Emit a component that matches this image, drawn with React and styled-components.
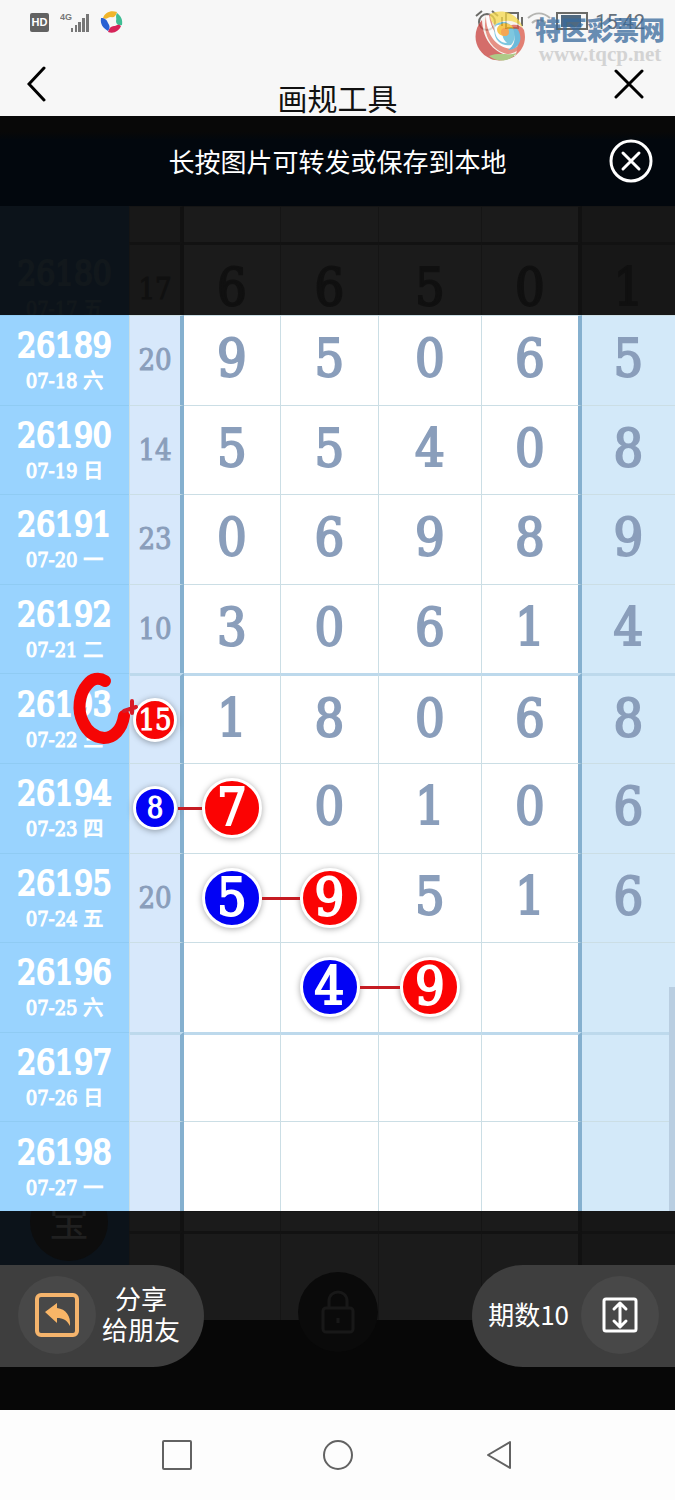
import React from 'react';
import styled, { createGlobalStyle, css } from 'styled-components';

const GlobalStyle = createGlobalStyle`
  * {
    box-sizing: border-box;
  }

  body {
    margin: 0;
    background: #fff;
    font-family: 'Noto Sans CJK SC', sans-serif;
  }

  button {
    border: 0;
    padding: 0;
    background: none;
    color: inherit;
    font: inherit;
    cursor: pointer;
  }

  svg {
    display: block;
  }
`;

const serif = css`
  font-family: 'DejaVu Serif Condensed', 'DejaVu Serif', 'Noto Sans CJK SC', serif;
`;

// phone status bar and title bar
const TopArea = styled.header`
  background: #f7f7f7;
`;

const StatusBar = styled.div`
  position: relative;
  display: flex;
  align-items: center;
  justify-content: space-between;
  height: 44px;
  padding: 0 30px;
  color: #5c5c5c;
`;

const StatusGroup = styled.div`
  display: flex;
  align-items: center;
  gap: ${(props) => props.$gap}px;
`;

const HdBadge = styled.span`
  width: 19px;
  border-radius: 2px;
  background: #626262;
  color: #fff;
  font: bold 11px/19px 'Liberation Sans', sans-serif;
  text-align: center;
`;

const Clock = styled.span`
  font: 20px/24px Roboto, sans-serif;
  color: #66717c;
`;

const Watermark = styled.div`
  position: absolute;
  top: 8px;
  right: 10px;
  display: flex;
  gap: 9px;
  opacity: 0.75;
`;

const WatermarkText = styled.div`
  display: flex;
  flex-direction: column;
  align-items: center;
`;

const WatermarkName = styled.span`
  color: #38699c;
  font-weight: 900;
  font-size: 26px;
  line-height: 42px;
  height: 36px;
`;

const WatermarkUrl = styled.span`
  color: #c8c8c8;
  font: bold 21px/20px 'Liberation Serif', serif;
`;

const TitleBar = styled.div`
  display: grid;
  grid-template-columns: 53px 1fr 44px;
  align-items: center;
  height: 72px;
  padding: 8px 24px 0 15px;
`;

const IconButton = styled.button`
  display: flex;
  align-items: center;
  justify-content: center;
  width: 44px;
  height: 44px;
`;

const Title = styled.h1`
  align-self: end;
  margin: 0;
  color: #111;
  font-weight: 400;
  font-size: 30px;
  line-height: 38px;
  text-align: center;
`;

// dark viewer around the chart
const Viewer = styled.main`
  background: #070707;
`;

const HintBar = styled.div`
  display: grid;
  grid-template-columns: 44px 1fr 44px;
  align-items: center;
  height: 90px;
  padding: 0 22px;
  background: linear-gradient(#080808 16px, #02070d 24px);
  color: #fff;
`;

const Hint = styled.p`
  grid-column: 2;
  margin: 0;
  font-size: 26px;
  line-height: 36px;
  text-align: center;
`;

const DimArea = styled.div`
  height: 109px;
  overflow: hidden;
`;

const Chart = styled.div`
  position: relative;
`;

const ScrollThumb = styled.div`
  position: absolute;
  right: 0;
  bottom: 0;
  width: 6px;
  height: 25%;
  background: #b9cee1;
`;

const lightColors = {
  label: '#99d3fe',
  labelLine: '#8fcbf3',
  sum: '#d7e8fb',
  cell: '#ffffff',
  tail: '#d3e9f9',
  line: '#cbdee5',
  thick: '#bdd9ec',
  side: '#85b0cf',
  labelText: '#ffffff',
  text: '#8a9ebb',
};

const dimColors = {
  label: '#0c131a',
  labelLine: '#0c131a',
  sum: '#181818',
  cell: '#1b1b1b',
  tail: '#171717',
  line: '#151515',
  thick: '#121212',
  side: '#111111',
  labelText: '#12181c',
  text: '#101010',
};

const Table = styled.table`
  width: 100%;
  height: ${(props) => props.$height}px;
  table-layout: fixed;
  border-collapse: separate;
  border-spacing: 0;
  ${serif}

  th,
  td {
    padding: 0;
    vertical-align: middle;
    text-align: center;
  }
`;

const Col = styled.col`
  width: ${(props) => props.$width}px;
`;

// a thick line opens a group of four rows, thin lines part the others
const rowLine = css`
  border-top: ${(props) =>
    props.$thick
      ? `3px solid ${props.$colors.thick}`
      : `1px solid ${props.$colors.line}`};
`;

const LabelCell = styled.th`
  position: relative;
  background: ${(props) => props.$colors.label};
  color: ${(props) => props.$colors.labelText};
  border-top: 1px solid ${(props) => props.$colors.labelLine};
  font-weight: 400;
`;

const SumCell = styled.td`
  background: ${(props) => props.$colors.sum};
  color: ${(props) => props.$colors.text};
  border-left: 1px solid ${(props) => props.$colors.line};
  border-right: 4px solid ${(props) => props.$colors.side};
  ${rowLine}
`;

const DigitCell = styled.td`
  background: ${(props) => props.$colors.cell};
  color: ${(props) => props.$colors.text};
  border-right: ${(props) =>
    props.$last
      ? `4px solid ${props.$colors.side}`
      : `1px solid ${props.$colors.line}`};
  ${rowLine}
`;

const TailCell = styled.td`
  background: ${(props) => props.$colors.tail};
  color: ${(props) => props.$colors.text};
  ${rowLine}
`;

const Issue = styled.span`
  display: block;
  padding-top: 4px;
  font-size: 33px;
  line-height: 38px;
  -webkit-text-stroke: 2px currentColor;
`;

const IssueDate = styled.span`
  display: block;
  font-size: 20px;
  line-height: 32px;
  -webkit-text-stroke: 1px currentColor;
`;

const Digit = styled.span`
  display: block;
  padding-bottom: ${(props) => (props.$small ? 0 : 4)}px;
  font-size: ${(props) => (props.$small ? 29 : 52)}px;
  line-height: ${(props) => (props.$small ? 40 : 60)}px;
  -webkit-text-stroke: ${(props) => (props.$small ? 1 : 2)}px currentColor;
`;

const Ball = styled.span`
  position: relative;
  display: block;
  width: ${(props) => (props.$small ? 44 : 60)}px;
  height: ${(props) => (props.$small ? 44 : 60)}px;
  margin: 0 auto;
  border: 3px solid #fff;
  border-radius: 50%;
  background: ${(props) => props.$color};
  box-shadow: 0 1px 6px rgba(0, 0, 0, 0.35);
  color: #fff;

  ${Digit} {
    line-height: ${(props) => (props.$small ? 38 : 52)}px;
  }

  &::before {
    content: '';
    position: absolute;
    top: 50%;
    right: 100%;
    width: ${(props) => props.$link}px;
    height: 3px;
    margin: -1px 3px 0 0;
    background: #c51b22;
  }
`;

const Scribble = styled.svg`
  position: absolute;
  top: -4px;
  left: 70px;
  z-index: 1;
`;

// bottom part
const Bottom = styled.div`
  position: relative;
  display: grid;
  height: 199px;
  overflow: hidden;

  > * {
    grid-area: 1 / 1;
  }
`;

const GhostCircle = styled.div`
  position: absolute;
  top: -28px;
  left: 30px;
  width: 78px;
  height: 78px;
  border-radius: 50%;
  background: #0d0d0d;
  color: #202020;
  font-size: 40px;
  line-height: 72px;
  text-align: center;
`;

const Toolbar = styled.div`
  position: relative;
  display: grid;
  grid-template-columns: 1fr auto 1fr;
  align-items: center;
  align-self: start;
  padding-top: 54px;
  color: #fff;
`;

const Pill = styled.button`
  display: flex;
  align-items: center;
  justify-self: ${(props) => (props.$right ? 'end' : 'start')};
  gap: ${(props) => (props.$right ? 12 : 6)}px;
  height: 102px;
  padding: ${(props) => (props.$right ? '0 16px 2px' : '0 24px 2px 18px')};
  border-radius: ${(props) => (props.$right ? '51px 0 0 51px' : '0 51px 51px 0')};
  background: #3e3e3e;
  font-size: 26px;
  line-height: 31px;
`;

const PillText = styled.span`
  padding-bottom: 4px;
`;

const PillIcon = styled.span`
  display: flex;
  align-items: center;
  justify-content: center;
  width: 78px;
  height: 78px;
  border-radius: 50%;
  background: #484848;
`;

const LockButton = styled.button`
  display: flex;
  align-items: center;
  justify-content: center;
  width: 80px;
  height: 80px;
  margin-bottom: 8px;
  border-radius: 50%;
  background: #0a0a0a;
`;

const NavBar = styled.nav`
  display: grid;
  grid-template-columns: repeat(3, 1fr);
  justify-items: center;
  align-items: center;
  height: 90px;
  padding: 0 96px;
  background: #fdfdfd;
`;

const columns = [129, 55, 97, 98, 103, 100, 93];

const rows = [
  { issue: '26189', date: '07-18 六', sum: 20, digits: [9, 5, 0, 6], tail: 5 },
  { issue: '26190', date: '07-19 日', sum: 14, digits: [5, 5, 4, 0], tail: 8 },
  { issue: '26191', date: '07-20 一', sum: 23, digits: [0, 6, 9, 8], tail: 9 },
  { issue: '26192', date: '07-21 二', sum: 10, digits: [3, 0, 6, 1], tail: 4 },
  {
    issue: '26193',
    date: '07-22 三',
    sum: { value: 15, color: '#f80505' },
    digits: [1, 8, 0, 6],
    tail: 8,
    thick: true,
    marked: true,
  },
  {
    issue: '26194',
    date: '07-23 四',
    sum: { value: 8, color: '#0202f5' },
    digits: [{ value: 7, color: '#fb0303', link: 24 }, 0, 1, 0],
    tail: 6,
  },
  {
    issue: '26195',
    date: '07-24 五',
    sum: 20,
    digits: [{ value: 5, color: '#0202f5' }, { value: 9, color: '#fb0303', link: 38 }, 5, 1],
    tail: 6,
  },
  {
    issue: '26196',
    date: '07-25 六',
    digits: [null, { value: 4, color: '#0202f5' }, { value: 9, color: '#fb0303', link: 40 }, null],
  },
  { issue: '26197', date: '07-26 日', digits: [null, null, null, null], thick: true },
  { issue: '26198', date: '07-27 一', digits: [null, null, null, null] },
];

const blank = [null, null, null, null];

function Value({ item, small }) {
  if (item === null || item === undefined) return null;
  if (typeof item === 'object') {
    return (
      <Ball $small={small} $color={item.color} $link={item.link || 0}>
        <Digit $small={small}>{item.value}</Digit>
      </Ball>
    );
  }
  return <Digit $small={small}>{item}</Digit>;
}

function ChartRow({ row, colors }) {
  const shared = { $colors: colors, $thick: row.thick };
  return (
    <tr style={row.height ? { height: row.height } : undefined}>
      <LabelCell scope="row" {...shared}>
        {row.issue && <Issue>{row.issue}</Issue>}
        {row.date && <IssueDate>{row.date}</IssueDate>}
        {row.marked && (
          <Scribble width="70" height="80" viewBox="70 670 70 80" fill="none" stroke="#f50505" strokeLinecap="round" strokeLinejoin="round">
            <path d="M105 681C99 677 92 678 87 685C79 694 77 710 83 722C87 731 94 737 104 738C113 738 122 730 124 716" strokeWidth="12" />
            <path d="M132 701v12M124 711l12-4" stroke="#d81a26" strokeWidth="4" />
          </Scribble>
        )}
      </LabelCell>
      <SumCell {...shared}>
        <Value item={row.sum} small />
      </SumCell>
      {row.digits.map((digit, i) => (
        <DigitCell key={i} $last={i === 3} {...shared}>
          <Value item={digit} />
        </DigitCell>
      ))}
      <TailCell {...shared}>
        <Value item={row.tail} />
      </TailCell>
    </tr>
  );
}

function NumberTable({ data, height, colors }) {
  return (
    <Table $height={height}>
      <colgroup>
        {columns.map((width, i) => (
          <Col key={i} $width={width} />
        ))}
      </colgroup>
      <tbody>
        {data.map((row, i) => (
          <ChartRow key={i} row={row} colors={colors} />
        ))}
      </tbody>
    </Table>
  );
}

function StatusIcons() {
  return (
    <svg width="120" height="26" viewBox="0 0 120 26" fill="none" stroke="#6b6b68" strokeWidth="2">
      <circle cx="14" cy="13" r="8" />
      <path d="M3 7l6-5M19 2l6 5" />
      <path d="M33 4h12v15H33zM29 8v9M49 8v9" />
      <path d="M55 9c7-6 15-6 22 0M59 14c4-4 10-4 14 0" stroke="#b5b5b2" />
      <path d="M84 4h30v16H84z" />
      <path d="M88 6h20v12H88z" fill="#4f6980" stroke="none" />
    </svg>
  );
}

function WatermarkLogo() {
  return (
    <svg width="52" height="54" viewBox="0 0 52 54" fill="none">
      <circle cx="26" cy="28" r="24" fill="#f8f3ec" />
      <path d="M8 12C-3 24 0 44 17 51C25 54 35 52 41 48C24 48 9 36 8 12z" fill="#c9403c" />
      <path d="M12 8C8 24 16 42 33 46C40 46 45 42 48 37C34 41 18 30 17 6z" fill="#e0705f" />
      <path d="M12 8C12 26 22 40 38 41L44 38C28 38 17 24 15 7z" fill="#fff" />
      <path d="M16 6C28 0 44 5 49 20C42 12 30 10 21 17C17 14 16 10 16 6z" fill="#f6d94a" />
      <path d="M50 22C53 33 49 42 41 48C46 37 44 25 33 19C40 15 47 17 50 22z" fill="#db5748" />
      <path d="M44 22C50 32 44 42 34 42C40 38 43 31 38 22C40 20 43 20 44 22z" fill="#3fa6d2" />
      <path d="M15 48C25 44 34 48 43 45C35 54 24 55 15 48z" fill="#97bb62" />
      <path d="M21 18C18 30 26 39 37 37C44 30 40 15 30 14C26 14 22 15 21 18z" fill="#56b8d8" />
      <path d="M21 19C20 29 26 35 33 35C28 31 27 24 31 19C27 16 23 16 21 19z" fill="#fff" />
      <path d="M23 21C25 14 36 13 40 21C35 19 33 22 33 27C29 29 23 27 23 21z" fill="#f8b81a" />
      <circle cx="31" cy="24" r="4" fill="#f38b20" />
    </svg>
  );
}

function App() {
  return (
    <>
      <GlobalStyle />
      <TopArea>
        <StatusBar>
          <StatusGroup $gap={11}>
            <HdBadge>HD</HdBadge>
            <svg width="29" height="20" viewBox="0 0 29 20" fill="#777">
              <text x="0" y="8" fontFamily="Liberation Sans, sans-serif" fontSize="9" fontWeight="bold">4G</text>
              <path d="M11 16h2v4h-2zM15 13h2v7h-2zM18 10h3v10h-3zM22 6h3v14h-3zM26 2h3v18h-3z" />
            </svg>
            <svg width="24" height="24" viewBox="0 0 24 24">
              <path d="M3 8C5 2 11 0 17 2C16 6 14 8 11 7C8 7 7 10 3 8z" fill="#f0b52c" />
              <path d="M17 3C21 6 23 10 22 15C18 16 16 14 16 11C17 8 15 7 17 3z" fill="#3fbd94" />
              <path d="M21 16C19 21 14 24 8 22C9 18 11 16 14 16C16 16 18 13 21 16z" fill="#d62459" />
              <path d="M8 21C3 18 0 14 1 8C5 8 7 10 8 13C9 15 11 17 8 21z" fill="#2861d3" />
            </svg>
          </StatusGroup>
          <StatusGroup $gap={2}>
            <StatusIcons />
            <Clock>15:42</Clock>
          </StatusGroup>
          <Watermark>
            <WatermarkLogo />
            <WatermarkText>
              <WatermarkName>特区彩票网</WatermarkName>
              <WatermarkUrl>www.tqcp.net</WatermarkUrl>
            </WatermarkText>
          </Watermark>
        </StatusBar>
        <TitleBar>
          <IconButton aria-label="返回">
            <svg width="20" height="36" viewBox="0 0 20 36" fill="none" stroke="#000" strokeWidth="3" strokeLinecap="round">
              <path d="M17 2L2 18L17 34" />
            </svg>
          </IconButton>
          <Title>画规工具</Title>
          <IconButton aria-label="关闭">
            <svg width="30" height="30" viewBox="0 0 30 30" fill="none" stroke="#000" strokeWidth="3" strokeLinecap="round">
              <path d="M2 2l26 26M28 2L2 28" />
            </svg>
          </IconButton>
        </TitleBar>
      </TopArea>

      <Viewer>
        <HintBar>
          <Hint>长按图片可转发或保存到本地</Hint>
          <IconButton aria-label="关闭图片">
            <svg width="44" height="44" viewBox="0 0 44 44" fill="none" stroke="#fff" strokeWidth="3" strokeLinecap="round">
              <circle cx="22" cy="22" r="20" />
              <path d="M14 14l16 16M30 14L14 30" />
            </svg>
          </IconButton>
        </HintBar>
        <DimArea>
          <NumberTable
            height={127}
            colors={dimColors}
            data={[
              { digits: blank, height: 36 },
              { issue: '26180', date: '07-17 五', sum: 17, digits: [6, 6, 5, 0], tail: 1, height: 91, thick: true },
            ]}
          />
        </DimArea>
        <Chart>
          <NumberTable height={896} colors={lightColors} data={rows} />
          <ScrollThumb />
        </Chart>
        <Bottom>
          <DimArea>
            <NumberTable
              height={132}
              colors={dimColors}
              data={[
                { digits: blank, height: 20 },
                { issue: '26199', digits: blank, height: 112, thick: true },
              ]}
            />
          </DimArea>
          <GhostCircle>宝</GhostCircle>
          <Toolbar>
            <Pill>
              <PillIcon>
                <svg width="44" height="44" viewBox="0 0 44 44" fill="none">
                  <rect x="2" y="2" width="40" height="40" rx="4" stroke="#f5b46c" strokeWidth="4" />
                  <path d="M10 19L22 10v5c9 1 14 8 13 18c-3-6-7-8-13-8v5z" fill="#f8b567" />
                </svg>
              </PillIcon>
              <PillText>
                分享
                <br />
                给朋友
              </PillText>
            </Pill>
            <LockButton aria-label="锁定">
              <svg width="36" height="44" viewBox="0 0 36 44" fill="none" stroke="#181818" strokeWidth="3">
                <rect x="3" y="18" width="30" height="24" rx="3" />
                <path d="M9 18v-7c0-12 18-12 18 0v7M18 28v5" />
              </svg>
            </LockButton>
            <Pill $right>
              <PillText>期数10</PillText>
              <PillIcon>
                <svg width="36" height="36" viewBox="0 0 36 36" fill="none" stroke="#fff" strokeWidth="3" strokeLinejoin="round" strokeLinecap="round">
                  <rect x="2" y="2" width="32" height="32" rx="2" />
                  <path d="M18 8v20M12 12l6-6l6 6M12 24l6 6l6-6" />
                </svg>
              </PillIcon>
            </Pill>
          </Toolbar>
        </Bottom>
      </Viewer>

      <NavBar>
        <IconButton aria-label="最近任务">
          <svg width="30" height="30" viewBox="0 0 30 30" fill="none" stroke="#626262" strokeWidth="2">
            <rect x="1" y="1" width="28" height="28" rx="1" />
          </svg>
        </IconButton>
        <IconButton aria-label="主屏幕">
          <svg width="30" height="30" viewBox="0 0 30 30" fill="none" stroke="#626262" strokeWidth="2">
            <circle cx="15" cy="15" r="14" />
          </svg>
        </IconButton>
        <IconButton aria-label="后退">
          <svg width="24" height="30" viewBox="0 0 24 30" fill="none" stroke="#626262" strokeWidth="2" strokeLinejoin="round">
            <path d="M23 2v26L1 15z" />
          </svg>
        </IconButton>
      </NavBar>
    </>
  );
}

export default App;
